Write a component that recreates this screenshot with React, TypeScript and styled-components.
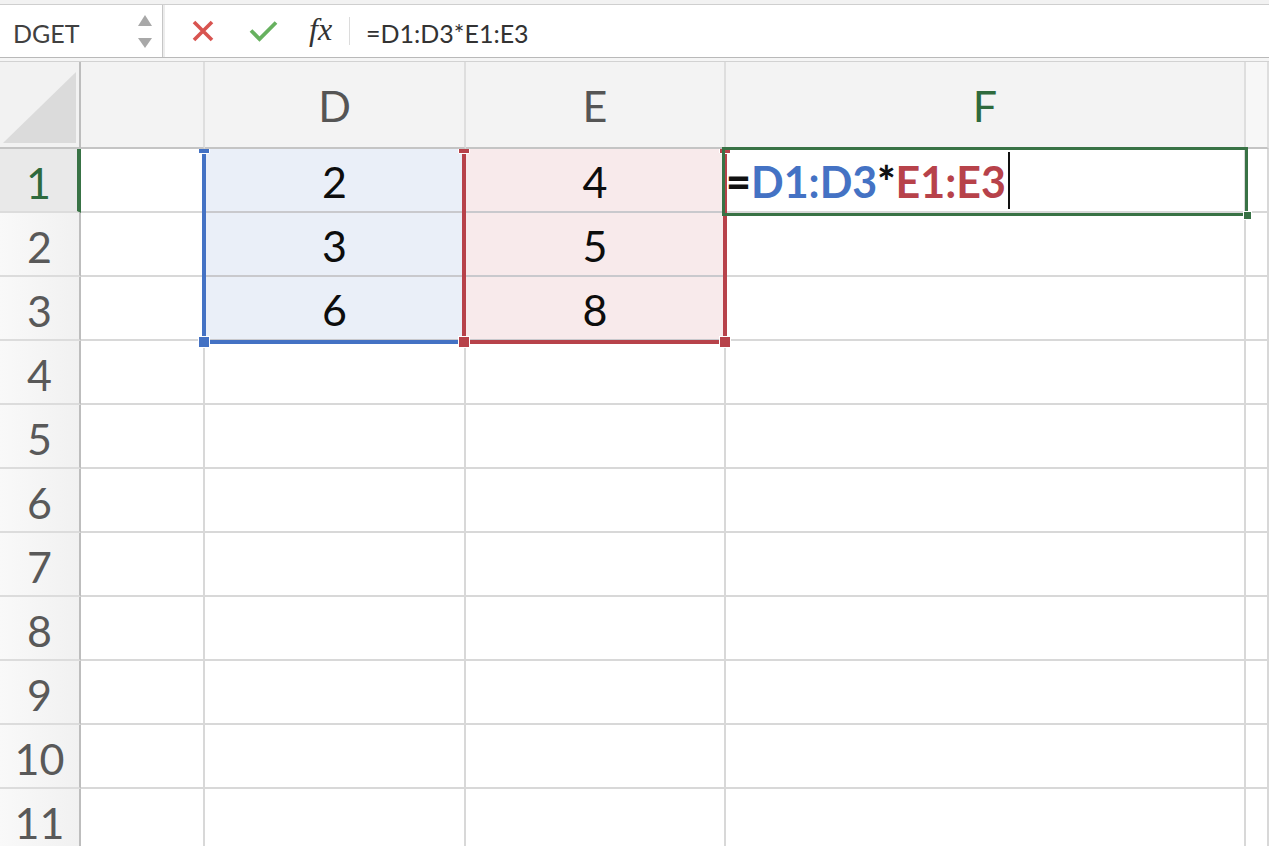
import React from "react";
import styled, { createGlobalStyle, css } from "styled-components";

const BLUE = "#4472c4";
const RED = "#b7424a";
const GREEN = "#387245";

const GlobalStyle = createGlobalStyle`
  html, body {
    margin: 0;
    padding: 0;
    background: #ffffff;
    overflow: hidden;
  }
  body {
    font-family: Lato, "Open Sans", "Liberation Sans", sans-serif;
  }
`;

const Page = styled.div`
  width: 1269px;
  height: 846px;
  overflow: hidden;
  background: #ffffff;
`;

const TopStrip = styled.div`
  height: 4px;
  background: #f2f2f2;
  border-bottom: 1px solid #cfcfcf;
`;

const FormulaBar = styled.div`
  display: flex;
  align-items: stretch;
  height: 52px;
  background: #ffffff;
  border-bottom: 1px solid #b9b9b9;
`;

const BarGap = styled.div`
  height: 3px;
  background: #f5f5f5;
  border-bottom: 1px solid #d2d2d2;
`;

const NameBox = styled.div`
  width: 163px;
  box-sizing: border-box;
  display: flex;
  align-items: center;
  justify-content: space-between;
  padding: 4px 10px 0 13px;
  border-right: 1px solid #c6c6c6;
  box-shadow: 2px 0 0 #ececec;
  font-size: 25px;
  color: #404040;
`;

const Spinner = styled.div`
  display: flex;
  flex-direction: column;
  gap: 12px;
  margin-bottom: 4px;
`;

const Arrow = styled.div<{ $down?: boolean }>`
  width: 0;
  height: 0;
  border-left: 7.5px solid transparent;
  border-right: 7.5px solid transparent;
  ${(p) =>
    p.$down
      ? css`border-top: 10px solid #a8a8a8;`
      : css`border-bottom: 11px solid #a8a8a8;`}
`;

const BarButton = styled.div<{ $ml: number }>`
  display: flex;
  align-items: center;
  margin-left: ${(p) => p.$ml}px;
`;

const Fx = styled.span`
  margin-left: 31px;
  align-self: center;
  font-family: "Liberation Serif", "DejaVu Serif", serif;
  font-style: italic;
  font-size: 32px;
  color: #333333;
  line-height: 1;
  margin-bottom: 4px;
`;

const Divider = styled.div`
  width: 1px;
  align-self: center;
  height: 28px;
  margin-left: 17px;
  background: #dcdcdc;
`;

const FormulaText = styled.div`
  display: flex;
  align-items: center;
  margin-left: 16px;
  padding-top: 4px;
  font-size: 25px;
  color: #333333;
`;

const Sheet = styled.div`
  display: grid;
  grid-template-columns: 81px 124px 261px 260px 520px 1fr;
  grid-template-rows: 87px repeat(11, 64px);
`;

const at = (r: number | string, c: number | string) => css`
  grid-row: ${r};
  grid-column: ${c};
`;

type Pos = { $r: number | string; $c: number | string };

const Corner = styled.div<Pos>`
  ${(p) => at(p.$r, p.$c)}
  background: #f2f2f2;
  border-right: 2px solid #bdbdbd;
  border-bottom: 2px solid #c4c4c4;
  display: flex;
  align-items: flex-end;
`;

const ColHeader = styled.div<Pos & { $active?: boolean; $faint?: boolean }>`
  ${(p) => at(p.$r, p.$c)}
  background: ${(p) => (p.$faint ? "#f7f7f7" : "#f3f3f3")};
  border-right: 2px solid #dedede;
  border-bottom: 2px solid #c4c4c4;
  display: flex;
  align-items: center;
  justify-content: center;
  padding-top: 3px;
  box-sizing: border-box;
  font-size: 43px;
  line-height: 1.2;
  color: ${(p) => (p.$active ? "#2e6a3d" : "#555555")};
`;

const RowHeader = styled.div<Pos & { $active?: boolean }>`
  ${(p) => at(p.$r, p.$c)}
  background: ${(p) =>
    p.$active ? "#e9e9e9" : "linear-gradient(90deg, #f9f9f9, #f1f1f1)"};
  border-right: ${(p) => (p.$active ? `4px solid ${GREEN}` : "2px solid #bdbdbd")};
  border-bottom: 2px solid #dcdcdc;
  display: flex;
  align-items: center;
  justify-content: center;
  padding-top: 5px;
  box-sizing: border-box;
  font-size: 43px;
  line-height: 1.2;
  color: ${(p) => (p.$active ? "#2e6a3d" : "#595959")};
`;

const fills: Record<string, string> = {
  none: "#ffffff",
  blue: "#eaeff8",
  red: "#f8eaeb",
};

const Cell = styled.div<Pos & { $fill: string }>`
  ${(p) => at(p.$r, p.$c)}
  background: ${(p) => fills[p.$fill]};
  border-right: 2px solid #d8d8d8;
  border-bottom: 2px solid ${(p) => (p.$fill === "none" ? "#d8d8d8" : "#c9c9cd")};
  display: flex;
  align-items: center;
  justify-content: center;
  padding-top: 4px;
  box-sizing: border-box;
  font-size: 43px;
  line-height: 1.2;
  color: #0d0d0d;
`;

const FormulaCell = styled(Cell)`
  justify-content: flex-start;
  font-weight: 700;
  padding-left: 0;
`;

const Token = styled.span<{ $color: string; $heavy?: boolean }>`
  color: ${(p) => p.$color};
  font-weight: ${(p) => (p.$heavy ? 900 : 700)};
`;

const Caret = styled.span`
  display: inline-block;
  width: 2px;
  height: 57px;
  margin-left: 2px;
  margin-bottom: 4px;
  background: #111111;
`;

const RangeBox = styled.div<
  Pos & { $color: string; $m: string; $right?: boolean }
>`
  ${(p) => at(p.$r, p.$c)}
  position: relative;
  z-index: 2;
  margin: ${(p) => p.$m};
  border-left: 4px solid ${(p) => p.$color};
  border-bottom: 4px solid ${(p) => p.$color};
  border-right: ${(p) => (p.$right ? `4px solid ${p.$color}` : "none")};
  pointer-events: none;
`;

const Handle = styled.div<{
  $color: string;
  $side: "left" | "right";
  $top?: boolean;
}>`
  position: absolute;
  width: 10px;
  height: ${(p) => (p.$top ? "4px" : "10px")};
  background: ${(p) => p.$color};
  ${(p) => (p.$side === "left" ? "left: -7px;" : "right: -7px;")}
  ${(p) =>
    p.$top
      ? css`
          top: 0;
          box-shadow: 1px 0 0 #fff, -1px 0 0 #fff, 0 1px 0 #fff;
        `
      : css`
          bottom: -7px;
          box-shadow: 0 0 0 1px #fff;
        `}
`;

const ActiveBox = styled.div<Pos>`
  ${(p) => at(p.$r, p.$c)}
  position: relative;
  z-index: 3;
  margin: -2px -2px -3px -4px;
  border: 3px solid ${GREEN};
  pointer-events: none;
`;

const FillHandle = styled.div`
  position: absolute;
  right: -6px;
  bottom: -6px;
  width: 7px;
  height: 7px;
  background: ${GREEN};
  box-shadow: 0 0 0 1px #fff;
`;

const CrossIcon = () => (
  <svg width="22" height="22" viewBox="0 0 22 22">
    <path
      d="M2 2 L20 20 M20 2 L2 20"
      stroke="#d85450"
      strokeWidth="3.6"
      strokeLinecap="butt"
      fill="none"
    />
  </svg>
);

const CheckIcon = () => (
  <svg width="29" height="22" viewBox="0 0 29 22">
    <path
      d="M2 10.5 L10.5 19 L27 2.5"
      stroke="#67b15f"
      strokeWidth="3.8"
      fill="none"
    />
  </svg>
);

const CornerTriangle = () => (
  <svg width="79" height="85" viewBox="0 0 79 85">
    <polygon points="3,81 76,10 76,81" fill="#dbdbdb" />
  </svg>
);

const columns = ["", "D", "E", "F", ""];
const data: Record<number, (string | null)[]> = {
  1: [null, "2", "4", null, null],
  2: [null, "3", "5", null, null],
  3: [null, "6", "8", null, null],
};

const fillFor = (row: number, col: number) => {
  if (row > 3) return "none";
  if (col === 1) return "blue";
  if (col === 2) return "red";
  return "none";
};

export default function App() {
  const rows = Array.from({ length: 11 }, (_, i) => i + 1);

  return (
    <Page>
      <GlobalStyle />
      <TopStrip />
      <FormulaBar>
        <NameBox>
          <span>DGET</span>
          <Spinner>
            <Arrow />
            <Arrow $down />
          </Spinner>
        </NameBox>
        <BarButton $ml={29}>
          <CrossIcon />
        </BarButton>
        <BarButton $ml={35}>
          <CheckIcon />
        </BarButton>
        <Fx>fx</Fx>
        <Divider />
        <FormulaText>=D1:D3*E1:E3</FormulaText>
      </FormulaBar>
      <BarGap />

      <Sheet>
        <Corner $r={1} $c={1}>
          <CornerTriangle />
        </Corner>
        {columns.map((label, i) => (
          <ColHeader
            key={`h${i}`}
            $r={1}
            $c={i + 2}
            $active={label === "F"}
            $faint={i === 4}
          >
            {label}
          </ColHeader>
        ))}

        {rows.map((row) => (
          <React.Fragment key={row}>
            <RowHeader $r={row + 1} $c={1} $active={row === 1}>
              {row}
            </RowHeader>
            {columns.map((_, col) =>
              row === 1 && col === 3 ? (
                <FormulaCell key={col} $r={row + 1} $c={col + 2} $fill="none">
                  <Token $color="#111" $heavy>=</Token>
                  <Token $color={BLUE}>D1:D3</Token>
                  <Token $color="#111" $heavy>*</Token>
                  <Token $color={RED}>E1:E3</Token>
                  <Caret />
                </FormulaCell>
              ) : (
                <Cell
                  key={col}
                  $r={row + 1}
                  $c={col + 2}
                  $fill={fillFor(row, col)}
                >
                  {data[row]?.[col] ?? ""}
                </Cell>
              )
            )}
          </React.Fragment>
        ))}

        <RangeBox $r="2 / 5" $c={3} $color={BLUE} $m="0 2px -3px -3px">
          <Handle $color={BLUE} $side="left" $top />
          <Handle $color={BLUE} $side="left" />
        </RangeBox>
        <RangeBox $r="2 / 5" $c={4} $color={RED} $m="0 -1px -3px -4px" $right>
          <Handle $color={RED} $side="left" $top />
          <Handle $color={RED} $side="right" $top />
          <Handle $color={RED} $side="left" />
          <Handle $color={RED} $side="right" />
        </RangeBox>
        <ActiveBox $r={2} $c={5}>
          <FillHandle />
        </ActiveBox>
      </Sheet>
    </Page>
  );
}
